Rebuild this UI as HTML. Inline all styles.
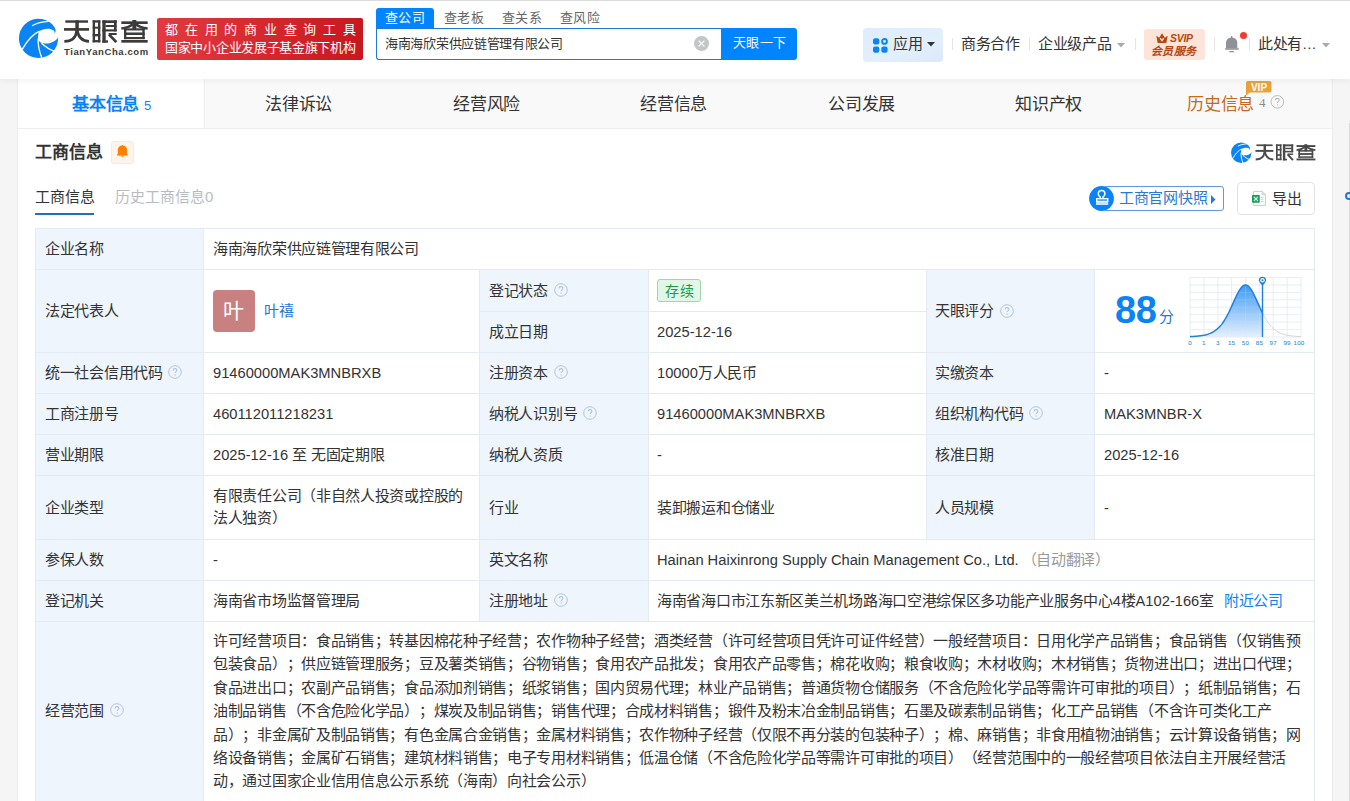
<!DOCTYPE html>
<html lang="zh-CN"><head><meta charset="utf-8">
<style>
*{box-sizing:border-box;margin:0;padding:0}
html,body{width:1350px;height:801px;overflow:hidden}
body{background:#f5f5f5;font-family:"Liberation Sans",sans-serif;color:#333;position:relative;text-spacing-trim:space-all}
.abs{position:absolute}
.hdr{position:absolute;left:0;top:0;width:1350px;height:79px;background:#fff;border-top:1px solid #dcdcdc;box-shadow:0 2px 6px rgba(0,0,0,.05);z-index:2}
.nowrap{white-space:nowrap}
.t{font-size:14.7px;line-height:22px}
</style></head><body>
<div class="hdr">
<svg class="abs" style="left:15px;top:13px" width="48" height="48" viewBox="0 0 800 800"><circle cx="392" cy="405" r="327" fill="#0a84f5"/>
    <path d="M400 290 C470 240 590 225 650 280 C665 300 665 320 655 338 C690 300 685 235 630 180 L780 110 L780 365 L722 382 C680 465 560 510 445 485 C400 465 385 430 385 400 C385 350 390 310 400 290Z" fill="#fff"/>
    <path d="M285 195 Q400 130 560 122" stroke="#fff" stroke-width="22" fill="none"/>
    <path d="M120 590 C200 450 300 330 410 285" stroke="#fff" stroke-width="22" fill="none"/>
    <path d="M385 410 C380 530 410 640 450 740" stroke="#fff" stroke-width="22" fill="none"/>
    <path d="M440 485 C520 560 580 600 650 620" stroke="#fff" stroke-width="22" fill="none"/></svg>
<svg class="abs" style="left:62px;top:16px" width="90" height="30" viewBox="0 0 1350 450"><g fill="#3d3a3a" stroke="none">
<rect x="50" y="50" width="340" height="36"/><rect x="30" y="166" width="375" height="40"/><rect x="200" y="50" width="52" height="156"/>
<rect x="460" y="50" width="115" height="34"/><rect x="460" y="346" width="115" height="34"/><rect x="460" y="50" width="36" height="330"/><rect x="540" y="50" width="35" height="330"/><rect x="460" y="145" width="115" height="30"/><rect x="460" y="255" width="115" height="35"/>
<rect x="605" y="50" width="50" height="335"/><rect x="605" y="50" width="215" height="40"/><rect x="780" y="50" width="40" height="165"/><rect x="655" y="120" width="160" height="30"/><rect x="605" y="185" width="215" height="32"/><rect x="605" y="350" width="85" height="35"/><rect x="700" y="240" width="120" height="30"/>
<rect x="890" y="65" width="395" height="40"/><rect x="1055" y="45" width="60" height="150"/>
<rect x="930" y="170" width="35" height="162"/><rect x="1205" y="170" width="35" height="162"/><rect x="930" y="170" width="310" height="32"/><rect x="930" y="232" width="310" height="38"/><rect x="930" y="300" width="310" height="32"/>
<rect x="890" y="345" width="395" height="40"/>
</g><g fill="none" stroke="#3d3a3a" stroke-width="40">
<path d="M222 200 Q205 365 35 365"/><path d="M228 200 Q255 365 405 365"/>
<path d="M705 262 L815 378"/>
<path d="M1072 100 Q990 165 890 172" stroke-width="38"/><path d="M1098 100 Q1180 165 1285 172" stroke-width="38"/>
</g></svg>
<div class="abs nowrap" style="left:64px;top:44.5px;font-size:9.5px;font-weight:bold;color:#3d3a3a;letter-spacing:0.6px;line-height:11px">TianYanCha.com</div>
<div class="abs" style="left:157px;top:17px;width:206px;height:42px;border-radius:2px;background:linear-gradient(90deg,#e23a40,#c9171e)"></div>
<div class="abs nowrap" style="left:165px;top:21px;font-size:13px;color:#fff;line-height:16px;letter-spacing:6.75px">都在用的商业查询工具</div>
<div class="abs nowrap" style="left:165px;top:38px;font-size:13px;color:#fff;line-height:17px;letter-spacing:-0.3px">国家中小企业发展子基金旗下机构</div>
<div class="abs" style="left:376px;top:7px;width:58px;height:20px;background:#0084ff;border-radius:3px 3px 0 0"></div>
<div class="abs nowrap" style="left:385px;top:8px;font-size:13.3px;color:#fff;line-height:17px"><span style="font-size:13px;letter-spacing:0.30px">查公司</span></div>
<div class="abs nowrap" style="left:444px;top:8px;font-size:13.3px;color:#666;line-height:17px"><span style="font-size:13px;letter-spacing:0.30px">查老板</span></div>
<div class="abs nowrap" style="left:502px;top:8px;font-size:13.3px;color:#666;line-height:17px"><span style="font-size:13px;letter-spacing:0.30px">查关系</span></div>
<div class="abs nowrap" style="left:560px;top:8px;font-size:13.3px;color:#666;line-height:17px"><span style="font-size:13px;letter-spacing:0.30px">查风险</span></div>
<div class="abs" style="left:376px;top:27px;width:350px;height:32px;border:1px solid #1f7ad6;border-right:none;border-radius:0 0 0 3px;background:#fff"></div>
<div class="abs nowrap" style="left:385px;top:34px;font-size:12.7px;color:#333;line-height:18px"><span style="font-size:13px;letter-spacing:-0.30px">海南海欣荣供应链管理有限公司</span></div>
<svg class="abs" style="left:694px;top:35px" width="15" height="15" viewBox="0 0 15 15"><circle cx="7.5" cy="7.5" r="7.5" fill="#c4c5c9"/><path d="M4.6 4.6L10.4 10.4M10.4 4.6L4.6 10.4" stroke="#fff" stroke-width="1.3"/></svg>
<div class="abs" style="left:721px;top:27px;width:76px;height:32px;background:#0084ff;border-radius:0 3px 3px 0"></div>
<div class="abs nowrap" style="left:733px;top:33px;font-size:13.3px;color:#fff;line-height:18px"><span style="font-size:13px;letter-spacing:0.30px">天眼一下</span></div>
<div class="abs" style="left:863px;top:27px;width:80px;height:34px;background:linear-gradient(160deg,#deecfc 0%,#e2effd 60%,#dbe8fa 100%);border-radius:4px"></div>
<svg class="abs" style="left:873px;top:36.5px" width="15" height="15" viewBox="0 0 15 15"><rect x="0" y="0.3" width="6.3" height="6.3" rx="2" fill="#0a84f5"/><circle cx="11.5" cy="3.4" r="2.4" fill="none" stroke="#0a84f5" stroke-width="1.9"/><rect x="0" y="8.5" width="6.3" height="6.3" rx="2" fill="#0a84f5"/><rect x="8.3" y="8.5" width="6.3" height="6.3" rx="2" fill="#0a84f5"/></svg>
<div class="abs nowrap" style="left:893px;top:33px;font-size:14.7px;color:#333;line-height:20px"><span style="font-size:15px;letter-spacing:-0.30px">应用</span></div>
<svg class="abs" style="left:927px;top:40.5px" width="8" height="5" viewBox="0 0 8 5"><path d="M0 0H8L4 4.5Z" fill="#333"/></svg>
<div class="abs" style="left:952px;top:37px;width:1px;height:12px;background:#e5e5e5"></div>
<div class="abs nowrap" style="left:961px;top:33px;font-size:14.7px;color:#333;line-height:20px"><span style="font-size:15px;letter-spacing:-0.30px">商务合作</span></div>
<div class="abs" style="left:1029px;top:37px;width:1px;height:12px;background:#e5e5e5"></div>
<div class="abs nowrap" style="left:1038px;top:33px;font-size:14.7px;color:#333;line-height:20px"><span style="font-size:15px;letter-spacing:-0.30px">企业级产品</span></div>
<svg class="abs" style="left:1117px;top:42px" width="8" height="5" viewBox="0 0 8 5"><path d="M0 0H8L4 4.5Z" fill="#aaa"/></svg>
<div class="abs" style="left:1135px;top:37px;width:1px;height:12px;background:#e5e5e5"></div>
<div class="abs" style="left:1144px;top:28px;width:61px;height:31px;background:#fde4d8;border-radius:3px"></div>
<svg class="abs" style="left:1156px;top:32px" width="12" height="10" viewBox="0 0 12 10"><path d="M0.3 2.8L3.2 4.8L6 0.3L8.8 4.8L11.7 2.8L10.3 10H1.7Z" fill="#b8460f"/><path d="M4.2 5.2L6 7.6L7.8 5.2" fill="none" stroke="#fde5da" stroke-width="1.3"/></svg>
<div class="abs nowrap" style="left:1170px;top:29px;font-size:10.5px;font-weight:bold;font-style:italic;color:#b8460f;line-height:16px;letter-spacing:-0.3px">SVIP</div>
<div class="abs nowrap" style="left:1151px;top:43px;font-size:11px;font-weight:bold;font-style:italic;color:#b8460f;line-height:14px;letter-spacing:0.3px">会员服务</div>
<div class="abs" style="left:1214px;top:37px;width:1px;height:12px;background:#e5e5e5"></div>
<svg class="abs" style="left:1224px;top:34px" width="16" height="18" viewBox="0 0 16 18"><rect x="7" y="1" width="1.3" height="2.5" fill="#8f9398"/><path d="M2 13.4V8C2 4.7 4.5 2.6 7.65 2.6C10.8 2.6 13.3 4.7 13.3 8V13.4Z" fill="#8f9398"/><rect x="1" y="13.2" width="13.8" height="1.5" rx=".4" fill="#8f9398"/><rect x="5.4" y="16" width="4.5" height="1.3" fill="#8f9398"/></svg>
<div class="abs" style="left:1240px;top:30.5px;width:7px;height:7px;border-radius:50%;background:#f53a30"></div>
<div class="abs" style="left:1249px;top:37px;width:1px;height:12px;background:#e5e5e5"></div>
<div class="abs nowrap" style="left:1258px;top:33px;font-size:14.7px;color:#333;line-height:20px"><span style="font-size:15px;letter-spacing:-0.30px">此处有</span>…</div>
<svg class="abs" style="left:1322px;top:42px" width="8" height="5" viewBox="0 0 8 5"><path d="M0 0H8L4 4.5Z" fill="#aaa"/></svg>
</div>
<div class="abs" style="left:17px;top:79px;width:1px;height:722px;background:#ebebeb"></div>
<div class="abs" style="left:1332px;top:79px;width:1px;height:722px;background:#ebebeb"></div>
<div class="abs" style="left:1349px;top:123px;width:1px;height:678px;background:#dcdcdc"></div>
<div class="abs" style="left:18px;top:79px;width:1314px;height:50px;background:#f9f9f9;border-bottom:1px solid #efefef"></div>
<div class="abs" style="left:18px;top:79px;width:187px;height:49px;background:#fff;border-right:1px solid #eee"></div>
<div class="abs nowrap" style="left:72px;top:94px;font-size:16.8px;font-weight:bold;color:#0a84f5;line-height:22px"><span style="font-size:17px;letter-spacing:-0.20px">基本信息</span> <span style="font-size:13px;font-weight:normal">5</span></div>
<div class="abs nowrap" style="left:265px;top:94px;font-size:16.8px;color:#333;line-height:22px"><span style="font-size:17px;letter-spacing:-0.20px">法律诉讼</span></div>
<div class="abs nowrap" style="left:453px;top:94px;font-size:16.8px;color:#333;line-height:22px"><span style="font-size:17px;letter-spacing:-0.20px">经营风险</span></div>
<div class="abs nowrap" style="left:640px;top:94px;font-size:16.8px;color:#333;line-height:22px"><span style="font-size:17px;letter-spacing:-0.20px">经营信息</span></div>
<div class="abs nowrap" style="left:828px;top:94px;font-size:16.8px;color:#333;line-height:22px"><span style="font-size:17px;letter-spacing:-0.20px">公司发展</span></div>
<div class="abs nowrap" style="left:1015px;top:94px;font-size:16.8px;color:#333;line-height:22px"><span style="font-size:17px;letter-spacing:-0.20px">知识产权</span></div>
<div class="abs nowrap" style="left:1187px;top:94px;font-size:16.8px;color:#c6691a;line-height:22px"><span style="font-size:17px;letter-spacing:-0.20px">历史信息</span></div>
<div class="abs nowrap" style="left:1259px;top:93px;font-size:13px;color:#8a8a8a;line-height:20px;font-family:'Liberation Serif',serif">4</div>
<div class="abs" style="left:18px;top:129px;width:1314px;height:672px;background:#fff"></div>
<div class="abs nowrap" style="left:35px;top:142px;font-size:17px;font-weight:bold;color:#333;line-height:22px">工商信息</div>
<div class="abs" style="left:111px;top:141px;width:23px;height:23px;background:#fff4ea;border:1px solid #fce8d8;border-radius:3px"></div>
<svg class="abs" style="left:116px;top:145px" width="13" height="13" viewBox="0 0 13 13"><rect x="6" y="0" width="0.9" height="1.2" fill="#ff8000"/><path d="M1.8 9.4V5C1.8 2.4 3.8 0.6 6.4 0.6C9 0.6 11 2.4 11 5V9.4Z" fill="#ff8000"/><rect x="1" y="9.1" width="10.8" height="1.5" rx=".6" fill="#ff8000"/><path d="M5 10.5A1.4 1.4 0 0 0 7.8 10.5Z" fill="#ff8000"/></svg>
<svg class="abs" style="left:1229px;top:139.5px" width="25" height="25" viewBox="0 0 800 800"><circle cx="392" cy="405" r="327" fill="#0a84f5"/>
    <path d="M400 290 C470 240 590 225 650 280 C665 300 665 320 655 338 C690 300 685 235 630 180 L780 110 L780 365 L722 382 C680 465 560 510 445 485 C400 465 385 430 385 400 C385 350 390 310 400 290Z" fill="#fff"/>
    <path d="M285 195 Q400 130 560 122" stroke="#fff" stroke-width="30" fill="none"/>
    <path d="M120 590 C200 450 300 330 410 285" stroke="#fff" stroke-width="30" fill="none"/>
    <path d="M385 410 C380 530 410 640 450 740" stroke="#fff" stroke-width="30" fill="none"/>
    <path d="M440 485 C520 560 580 600 650 620" stroke="#fff" stroke-width="30" fill="none"/></svg>
<svg class="abs" style="left:1253.6px;top:141.8px" width="64.5" height="21.5" viewBox="0 0 1350 450"><g fill="#4a4a4a" stroke="none">
<rect x="50" y="50" width="340" height="36"/><rect x="30" y="166" width="375" height="40"/><rect x="200" y="50" width="52" height="156"/>
<rect x="460" y="50" width="115" height="34"/><rect x="460" y="346" width="115" height="34"/><rect x="460" y="50" width="36" height="330"/><rect x="540" y="50" width="35" height="330"/><rect x="460" y="145" width="115" height="30"/><rect x="460" y="255" width="115" height="35"/>
<rect x="605" y="50" width="50" height="335"/><rect x="605" y="50" width="215" height="40"/><rect x="780" y="50" width="40" height="165"/><rect x="655" y="120" width="160" height="30"/><rect x="605" y="185" width="215" height="32"/><rect x="605" y="350" width="85" height="35"/><rect x="700" y="240" width="120" height="30"/>
<rect x="890" y="65" width="395" height="40"/><rect x="1055" y="45" width="60" height="150"/>
<rect x="930" y="170" width="35" height="162"/><rect x="1205" y="170" width="35" height="162"/><rect x="930" y="170" width="310" height="32"/><rect x="930" y="232" width="310" height="38"/><rect x="930" y="300" width="310" height="32"/>
<rect x="890" y="345" width="395" height="40"/>
</g><g fill="none" stroke="#4a4a4a" stroke-width="40">
<path d="M222 200 Q205 365 35 365"/><path d="M228 200 Q255 365 405 365"/>
<path d="M705 262 L815 378"/>
<path d="M1072 100 Q990 165 890 172" stroke-width="38"/><path d="M1098 100 Q1180 165 1285 172" stroke-width="38"/>
</g></svg>
<div class="abs nowrap" style="left:35px;top:187px;font-size:15px;color:#333;line-height:20px">工商信息</div>
<div class="abs" style="left:35px;top:213px;width:59px;height:2px;background:#1f6fc6"></div>
<div class="abs nowrap" style="left:115px;top:187px;font-size:15px;color:#b8bcc2;line-height:20px">历史工商信息0</div>
<div class="abs" style="left:1103px;top:186px;width:121px;height:25px;border:1px solid #5d9be0;border-radius:3px"></div>
<svg class="abs" style="left:1089px;top:186px" width="25" height="25" viewBox="0 0 25 25"><circle cx="12.5" cy="12.5" r="12.4" fill="#0a84f5"/><path d="M11.2 12.6V10.9C9.9 10.3 9.3 9.1 9.3 7.8C9.3 6 10.8 4.6 12.6 4.6C14.4 4.6 15.9 6 15.9 7.8C15.9 9.1 15.2 10.3 14 10.9V12.6" fill="none" stroke="#fff" stroke-width="1.5"/><rect x="7.7" y="12.7" width="11" height="2.7" fill="none" stroke="#fff" stroke-width="1.4"/><rect x="7" y="16" width="12.2" height="3" fill="#c5e6fc"/></svg>
<div class="abs nowrap" style="left:1119px;top:188px;font-size:14.7px;color:#2a7ad3;line-height:20px"><span style="font-size:15px;letter-spacing:-0.30px">工商官网快照</span></div>
<svg class="abs" style="left:1211px;top:195px" width="5" height="9" viewBox="0 0 5 9"><path d="M0 0L4.5 4.5L0 9Z" fill="#2a7ad3"/></svg>
<div class="abs" style="left:1237px;top:182px;width:78px;height:33px;border:1px solid #e3e3e3;border-radius:4px"></div>
<svg class="abs" style="left:1251px;top:190px" width="16" height="17" viewBox="0 0 16 17"><path d="M2.6 1.4H11.2L14.4 4.6V15.4H2.6Z" fill="#fff" stroke="#c9cacd" stroke-width="1"/><path d="M11.2 1.4V4.6H14.4" fill="#e6e6e8" stroke="#c9cacd" stroke-width="1"/><path d="M10 7.4H12.4M10 9.3H12.4M10 11.4H12.4" stroke="#c3c3c6" stroke-width="0.9"/><rect x="1" y="5" width="7.8" height="7.8" rx="0.8" fill="#1f9d5c"/><path d="M2.9 6.9L6.9 10.9M6.9 6.9L2.9 10.9" stroke="#c8f7dc" stroke-width="1.3"/></svg>
<div class="abs nowrap" style="left:1272px;top:189px;font-size:14.7px;color:#333;line-height:20px"><span style="font-size:15px;letter-spacing:-0.30px">导出</span></div>
<div class="abs" style="left:35px;top:228px;width:168px;height:573px;background:#eef5fd"></div>
<div class="abs" style="left:479px;top:269px;width:169px;height:352px;background:#eef5fd"></div>
<div class="abs" style="left:926px;top:269px;width:168px;height:270px;background:#eef5fd"></div>
<div class="abs" style="left:35px;top:228px;width:1280px;height:1px;background:#e3eaf1"></div>
<div class="abs" style="left:35px;top:269px;width:1280px;height:1px;background:#e3eaf1"></div>
<div class="abs" style="left:35px;top:352px;width:1280px;height:1px;background:#e3eaf1"></div>
<div class="abs" style="left:35px;top:393px;width:1280px;height:1px;background:#e3eaf1"></div>
<div class="abs" style="left:35px;top:434px;width:1280px;height:1px;background:#e3eaf1"></div>
<div class="abs" style="left:35px;top:475px;width:1280px;height:1px;background:#e3eaf1"></div>
<div class="abs" style="left:35px;top:539px;width:1280px;height:1px;background:#e3eaf1"></div>
<div class="abs" style="left:35px;top:580px;width:1280px;height:1px;background:#e3eaf1"></div>
<div class="abs" style="left:35px;top:621px;width:1280px;height:1px;background:#e3eaf1"></div>
<div class="abs" style="left:479px;top:311px;width:448px;height:1px;background:#e3eaf1"></div>
<div class="abs" style="left:35px;top:228px;width:1px;height:574px;background:#e3eaf1"></div>
<div class="abs" style="left:203px;top:228px;width:1px;height:574px;background:#e3eaf1"></div>
<div class="abs" style="left:1314px;top:228px;width:1px;height:574px;background:#e3eaf1"></div>
<div class="abs" style="left:479px;top:269px;width:1px;height:353px;background:#e3eaf1"></div>
<div class="abs" style="left:648px;top:269px;width:1px;height:353px;background:#e3eaf1"></div>
<div class="abs" style="left:926px;top:269px;width:1px;height:271px;background:#e3eaf1"></div>
<div class="abs" style="left:1094px;top:269px;width:1px;height:271px;background:#e3eaf1"></div>
<div class="abs nowrap t" style="left:45px;top:238.0px;color:#333"><span style="font-size:15px;letter-spacing:-0.30px">企业名称</span></div>
<div class="abs nowrap t" style="left:213px;top:238.0px;color:#333"><span style="font-size:15px;letter-spacing:-0.30px">海南海欣荣供应链管理有限公司</span></div>
<div class="abs nowrap t" style="left:45px;top:300.0px;color:#333"><span style="font-size:15px;letter-spacing:-0.30px">法定代表人</span></div>
<div class="abs nowrap t" style="left:489px;top:279.5px;color:#333"><span style="font-size:15px;letter-spacing:-0.30px">登记状态</span></div>
<div class="abs nowrap t" style="left:489px;top:321.0px;color:#333"><span style="font-size:15px;letter-spacing:-0.30px">成立日期</span></div>
<div class="abs nowrap t" style="left:657px;top:321.0px;color:#333">2025-12-16</div>
<div class="abs nowrap t" style="left:935px;top:300.0px;color:#333"><span style="font-size:15px;letter-spacing:-0.30px">天眼评分</span></div>
<div class="abs nowrap t" style="left:45px;top:362.0px;color:#333"><span style="font-size:15px;letter-spacing:-0.30px">统一社会信用代码</span></div>
<div class="abs nowrap t" style="left:213px;top:362.0px;color:#333">91460000MAK3MNBRXB</div>
<div class="abs nowrap t" style="left:489px;top:362.0px;color:#333"><span style="font-size:15px;letter-spacing:-0.30px">注册资本</span></div>
<div class="abs nowrap t" style="left:657px;top:362.0px;color:#333">10000<span style="font-size:15px;letter-spacing:-0.30px">万人民币</span></div>
<div class="abs nowrap t" style="left:935px;top:362.0px;color:#333"><span style="font-size:15px;letter-spacing:-0.30px">实缴资本</span></div>
<div class="abs nowrap t" style="left:1104px;top:362.0px;color:#333">-</div>
<div class="abs nowrap t" style="left:45px;top:403.0px;color:#333"><span style="font-size:15px;letter-spacing:-0.30px">工商注册号</span></div>
<div class="abs nowrap t" style="left:213px;top:403.0px;color:#333">460112011218231</div>
<div class="abs nowrap t" style="left:489px;top:403.0px;color:#333"><span style="font-size:15px;letter-spacing:-0.30px">纳税人识别号</span></div>
<div class="abs nowrap t" style="left:657px;top:403.0px;color:#333">91460000MAK3MNBRXB</div>
<div class="abs nowrap t" style="left:935px;top:403.0px;color:#333"><span style="font-size:15px;letter-spacing:-0.30px">组织机构代码</span></div>
<div class="abs nowrap t" style="left:1104px;top:403.0px;color:#333">MAK3MNBR-X</div>
<div class="abs nowrap t" style="left:45px;top:444.0px;color:#333"><span style="font-size:15px;letter-spacing:-0.30px">营业期限</span></div>
<div class="abs nowrap t" style="left:213px;top:444.0px;color:#333">2025-12-16 <span style="font-size:15px;letter-spacing:-0.30px">至</span> <span style="font-size:15px;letter-spacing:-0.30px">无固定期限</span></div>
<div class="abs nowrap t" style="left:489px;top:444.0px;color:#333"><span style="font-size:15px;letter-spacing:-0.30px">纳税人资质</span></div>
<div class="abs nowrap t" style="left:657px;top:444.0px;color:#333">-</div>
<div class="abs nowrap t" style="left:935px;top:444.0px;color:#333"><span style="font-size:15px;letter-spacing:-0.30px">核准日期</span></div>
<div class="abs nowrap t" style="left:1104px;top:444.0px;color:#333">2025-12-16</div>
<div class="abs nowrap t" style="left:45px;top:496.5px;color:#333"><span style="font-size:15px;letter-spacing:-0.30px">企业类型</span></div>
<div class="abs nowrap t" style="left:489px;top:496.5px;color:#333"><span style="font-size:15px;letter-spacing:-0.30px">行业</span></div>
<div class="abs nowrap t" style="left:657px;top:496.5px;color:#333"><span style="font-size:15px;letter-spacing:-0.30px">装卸搬运和仓储业</span></div>
<div class="abs nowrap t" style="left:935px;top:496.5px;color:#333"><span style="font-size:15px;letter-spacing:-0.30px">人员规模</span></div>
<div class="abs nowrap t" style="left:1104px;top:496.5px;color:#333">-</div>
<div class="abs nowrap t" style="left:45px;top:549.0px;color:#333"><span style="font-size:15px;letter-spacing:-0.30px">参保人数</span></div>
<div class="abs nowrap t" style="left:213px;top:549.0px;color:#333">-</div>
<div class="abs nowrap t" style="left:489px;top:549.0px;color:#333"><span style="font-size:15px;letter-spacing:-0.30px">英文名称</span></div>
<div class="abs nowrap t" style="left:657px;top:549.0px;color:#333">Hainan Haixinrong Supply Chain Management Co., Ltd.<span style="color:#999;margin-left:3px"><span style="font-size:15px;letter-spacing:-0.30px">（自动翻译）</span></span></div>
<div class="abs nowrap t" style="left:45px;top:590.0px;color:#333"><span style="font-size:15px;letter-spacing:-0.30px">登记机关</span></div>
<div class="abs nowrap t" style="left:213px;top:590.0px;color:#333"><span style="font-size:15px;letter-spacing:-0.30px">海南省市场监督管理局</span></div>
<div class="abs nowrap t" style="left:489px;top:590.0px;color:#333"><span style="font-size:15px;letter-spacing:-0.30px">注册地址</span></div>
<div class="abs nowrap t" style="left:657px;top:590.0px;color:#333"><span style="font-size:15px;letter-spacing:-0.30px">海南省海口市江东新区美兰机场路海口空港综保区多功能产业服务中心</span>4<span style="font-size:15px;letter-spacing:-0.30px">楼</span>A102-166<span style="font-size:15px;letter-spacing:-0.30px">室</span> <span style="color:#0a84f5;margin-left:6px"><span style="font-size:15px;letter-spacing:-0.30px">附近公司</span></span></div>
<div class="abs nowrap t" style="left:213px;top:485px;color:#333"><span style="font-size:15px;letter-spacing:-0.30px">有限责任公司（非自然人投资或控股的</span></div>
<div class="abs nowrap t" style="left:213px;top:507px;color:#333"><span style="font-size:15px;letter-spacing:-0.30px">法人独资）</span></div>
<div class="abs nowrap t" style="left:45px;top:700px;color:#333"><span style="font-size:15px;letter-spacing:-0.30px">经营范围</span></div>
<div class="abs nowrap t" style="left:213px;top:630.0px;color:#333"><span style="font-size:15px;letter-spacing:-0.30px">许可经营项目：食品销售；转基因棉花种子经营；农作物种子经营；酒类经营（许可经营项目凭许可证件经营）一般经营项目：日用化学产品销售；食品销售（仅销售预</span></div>
<div class="abs nowrap t" style="left:213px;top:653.4px;color:#333"><span style="font-size:15px;letter-spacing:-0.30px">包装食品）；供应链管理服务；豆及薯类销售；谷物销售；食用农产品批发；食用农产品零售；棉花收购；粮食收购；木材收购；木材销售；货物进出口；进出口代理；</span></div>
<div class="abs nowrap t" style="left:213px;top:676.8px;color:#333"><span style="font-size:15px;letter-spacing:-0.30px">食品进出口；农副产品销售；食品添加剂销售；纸浆销售；国内贸易代理；林业产品销售；普通货物仓储服务（不含危险化学品等需许可审批的项目）；纸制品销售；石</span></div>
<div class="abs nowrap t" style="left:213px;top:700.2px;color:#333"><span style="font-size:15px;letter-spacing:-0.30px">油制品销售（不含危险化学品）；煤炭及制品销售；销售代理；合成材料销售；锻件及粉末冶金制品销售；石墨及碳素制品销售；化工产品销售（不含许可类化工产</span></div>
<div class="abs nowrap t" style="left:213px;top:723.6px;color:#333"><span style="font-size:15px;letter-spacing:-0.30px">品）；非金属矿及制品销售；有色金属合金销售；金属材料销售；农作物种子经营（仅限不再分装的包装种子）；棉、麻销售；非食用植物油销售；云计算设备销售；网</span></div>
<div class="abs nowrap t" style="left:213px;top:747.0px;color:#333"><span style="font-size:15px;letter-spacing:-0.30px">络设备销售；金属矿石销售；建筑材料销售；电子专用材料销售；低温仓储（不含危险化学品等需许可审批的项目）（经营范围中的一般经营项目依法自主开展经营活</span></div>
<div class="abs nowrap t" style="left:213px;top:770.4px;color:#333"><span style="font-size:15px;letter-spacing:-0.30px">动，通过国家企业信用信息公示系统（海南）向社会公示）</span></div>
<div class="abs" style="left:213px;top:290px;width:42px;height:42px;border-radius:4px;background:#c98080"></div>
<div class="abs nowrap" style="left:223px;top:300px;font-size:21px;color:#fff;line-height:22px">叶</div>
<div class="abs nowrap" style="left:264px;top:300px;font-size:14.7px;color:#1f78d1;line-height:22px"><span style="font-size:15px;letter-spacing:-0.30px">叶禧</span></div>
<div class="abs" style="left:657px;top:279px;width:44px;height:23px;border-radius:3px;background:#e0f7e7;border:1px solid #a3d3b0"></div>
<div class="abs nowrap" style="left:665px;top:279.5px;font-size:14px;letter-spacing:1px;color:#1a9a46;line-height:22px">存续</div>
<svg class="abs" style="left:554px;top:282.5px" width="14" height="14" viewBox="0 0 14 14"><circle cx="7" cy="7" r="6.3" fill="none" stroke="#b0c5da" stroke-width="1"/><path d="M5.1 5.4C5.1 4.3 5.9 3.6 7 3.6S8.9 4.3 8.9 5.3C8.9 6.5 7.2 6.7 7.2 8.1" fill="none" stroke="#b0c5da" stroke-width="1.1"/><circle cx="7.2" cy="10" r=".65" fill="#b0c5da"/></svg>
<svg class="abs" style="left:1000px;top:303.5px" width="14" height="14" viewBox="0 0 14 14"><circle cx="7" cy="7" r="6.3" fill="none" stroke="#b0c5da" stroke-width="1"/><path d="M5.1 5.4C5.1 4.3 5.9 3.6 7 3.6S8.9 4.3 8.9 5.3C8.9 6.5 7.2 6.7 7.2 8.1" fill="none" stroke="#b0c5da" stroke-width="1.1"/><circle cx="7.2" cy="10" r=".65" fill="#b0c5da"/></svg>
<svg class="abs" style="left:168px;top:365.3px" width="14" height="14" viewBox="0 0 14 14"><circle cx="7" cy="7" r="6.3" fill="none" stroke="#b0c5da" stroke-width="1"/><path d="M5.1 5.4C5.1 4.3 5.9 3.6 7 3.6S8.9 4.3 8.9 5.3C8.9 6.5 7.2 6.7 7.2 8.1" fill="none" stroke="#b0c5da" stroke-width="1.1"/><circle cx="7.2" cy="10" r=".65" fill="#b0c5da"/></svg>
<svg class="abs" style="left:554px;top:365.3px" width="14" height="14" viewBox="0 0 14 14"><circle cx="7" cy="7" r="6.3" fill="none" stroke="#b0c5da" stroke-width="1"/><path d="M5.1 5.4C5.1 4.3 5.9 3.6 7 3.6S8.9 4.3 8.9 5.3C8.9 6.5 7.2 6.7 7.2 8.1" fill="none" stroke="#b0c5da" stroke-width="1.1"/><circle cx="7.2" cy="10" r=".65" fill="#b0c5da"/></svg>
<svg class="abs" style="left:583px;top:406.3px" width="14" height="14" viewBox="0 0 14 14"><circle cx="7" cy="7" r="6.3" fill="none" stroke="#b0c5da" stroke-width="1"/><path d="M5.1 5.4C5.1 4.3 5.9 3.6 7 3.6S8.9 4.3 8.9 5.3C8.9 6.5 7.2 6.7 7.2 8.1" fill="none" stroke="#b0c5da" stroke-width="1.1"/><circle cx="7.2" cy="10" r=".65" fill="#b0c5da"/></svg>
<svg class="abs" style="left:1029.3px;top:406.3px" width="14" height="14" viewBox="0 0 14 14"><circle cx="7" cy="7" r="6.3" fill="none" stroke="#b0c5da" stroke-width="1"/><path d="M5.1 5.4C5.1 4.3 5.9 3.6 7 3.6S8.9 4.3 8.9 5.3C8.9 6.5 7.2 6.7 7.2 8.1" fill="none" stroke="#b0c5da" stroke-width="1.1"/><circle cx="7.2" cy="10" r=".65" fill="#b0c5da"/></svg>
<svg class="abs" style="left:554px;top:593.3px" width="14" height="14" viewBox="0 0 14 14"><circle cx="7" cy="7" r="6.3" fill="none" stroke="#b0c5da" stroke-width="1"/><path d="M5.1 5.4C5.1 4.3 5.9 3.6 7 3.6S8.9 4.3 8.9 5.3C8.9 6.5 7.2 6.7 7.2 8.1" fill="none" stroke="#b0c5da" stroke-width="1.1"/><circle cx="7.2" cy="10" r=".65" fill="#b0c5da"/></svg>
<svg class="abs" style="left:110px;top:702.8px" width="14" height="14" viewBox="0 0 14 14"><circle cx="7" cy="7" r="6.3" fill="none" stroke="#b0c5da" stroke-width="1"/><path d="M5.1 5.4C5.1 4.3 5.9 3.6 7 3.6S8.9 4.3 8.9 5.3C8.9 6.5 7.2 6.7 7.2 8.1" fill="none" stroke="#b0c5da" stroke-width="1.1"/><circle cx="7.2" cy="10" r=".65" fill="#b0c5da"/></svg>
<svg class="abs" style="left:1245px;top:81px" width="27" height="15" viewBox="0 0 27 15"><path d="M2.5 0H24.5A2 2 0 0 1 26.5 2V9.5A2 2 0 0 1 24.5 11.5H5L1 14.5V2A2 2 0 0 1 2.5 0Z" fill="#e9a23b"/><text x="14" y="9.6" font-family="Liberation Sans" font-size="10" font-weight="bold" fill="#fff" text-anchor="middle">VIP</text></svg>
<svg class="abs" style="left:1270px;top:95px" width="15" height="15" viewBox="0 0 15 15"><circle cx="7.3" cy="6.8" r="6.3" fill="none" stroke="#bbb" stroke-width="1"/><path d="M5.4 5.2C5.4 4.1 6.2 3.4 7.3 3.4S9.2 4.1 9.2 5.1C9.2 6.3 7.5 6.5 7.5 7.9" fill="none" stroke="#bbb" stroke-width="1.1"/><circle cx="7.5" cy="9.8" r=".65" fill="#bbb"/></svg>
<div class="abs" style="left:1345px;top:192px;width:8px;height:8px;border-radius:50%;border:2px solid #1f78d1"></div>
<div class="abs nowrap" style="left:1115px;top:288px;font-size:38px;font-weight:bold;color:#0a84f5;line-height:44px;letter-spacing:-0.5px">88</div>
<div class="abs nowrap" style="left:1159px;top:306.5px;font-size:15px;color:#1f78d1;line-height:20px">分</div>
<svg class="abs" style="left:1185px;top:272px" width="125" height="78" viewBox="1185 272 125 78"><line x1="1190.0" y1="277.5" x2="1190.0" y2="337" stroke="#eef2f8" stroke-width="1"/><line x1="1203.9" y1="277.5" x2="1203.9" y2="337" stroke="#eef2f8" stroke-width="1"/><line x1="1217.8" y1="277.5" x2="1217.8" y2="337" stroke="#eef2f8" stroke-width="1"/><line x1="1231.6" y1="277.5" x2="1231.6" y2="337" stroke="#eef2f8" stroke-width="1"/><line x1="1245.5" y1="277.5" x2="1245.5" y2="337" stroke="#eef2f8" stroke-width="1"/><line x1="1259.4" y1="277.5" x2="1259.4" y2="337" stroke="#eef2f8" stroke-width="1"/><line x1="1273.2" y1="277.5" x2="1273.2" y2="337" stroke="#eef2f8" stroke-width="1"/><line x1="1287.1" y1="277.5" x2="1287.1" y2="337" stroke="#eef2f8" stroke-width="1"/><line x1="1301.0" y1="277.5" x2="1301.0" y2="337" stroke="#eef2f8" stroke-width="1"/><line x1="1190" y1="277.5" x2="1301" y2="277.5" stroke="#eef2f8" stroke-width="1"/><line x1="1190" y1="284.9" x2="1301" y2="284.9" stroke="#eef2f8" stroke-width="1"/><line x1="1190" y1="292.4" x2="1301" y2="292.4" stroke="#eef2f8" stroke-width="1"/><line x1="1190" y1="299.8" x2="1301" y2="299.8" stroke="#eef2f8" stroke-width="1"/><line x1="1190" y1="307.2" x2="1301" y2="307.2" stroke="#eef2f8" stroke-width="1"/><line x1="1190" y1="314.7" x2="1301" y2="314.7" stroke="#eef2f8" stroke-width="1"/><line x1="1190" y1="322.1" x2="1301" y2="322.1" stroke="#eef2f8" stroke-width="1"/><line x1="1190" y1="329.6" x2="1301" y2="329.6" stroke="#eef2f8" stroke-width="1"/><line x1="1190" y1="337.0" x2="1301" y2="337.0" stroke="#eef2f8" stroke-width="1"/><defs><linearGradient id="g1" x1="0" y1="0" x2="0" y2="1"><stop offset="0" stop-color="#3d9bf5"/><stop offset="1" stop-color="#e6f1fd"/></linearGradient></defs><path d="M1190.0 336.64 L1191.0 336.60 L1192.0 336.55 L1193.0 336.49 L1194.0 336.43 L1195.0 336.36 L1196.0 336.28 L1197.0 336.19 L1198.0 336.09 L1199.0 335.98 L1200.0 335.86 L1201.0 335.72 L1202.0 335.56 L1203.0 335.38 L1204.0 335.18 L1205.0 334.96 L1206.0 334.71 L1207.0 334.44 L1208.0 334.13 L1209.0 333.78 L1210.0 333.39 L1211.0 332.96 L1212.0 332.49 L1213.0 331.95 L1214.0 331.36 L1215.0 330.71 L1216.0 329.98 L1217.0 329.18 L1218.0 328.30 L1219.0 327.34 L1220.0 326.27 L1221.0 325.12 L1222.0 323.86 L1223.0 322.49 L1224.0 321.01 L1225.0 319.42 L1226.0 317.73 L1227.0 315.92 L1228.0 314.01 L1229.0 312.01 L1230.0 309.93 L1231.0 307.77 L1232.0 305.57 L1233.0 303.34 L1234.0 301.11 L1235.0 298.90 L1236.0 296.74 L1237.0 294.68 L1238.0 292.74 L1239.0 290.95 L1240.0 289.34 L1241.0 287.96 L1242.0 286.81 L1243.0 285.93 L1244.0 285.34 L1245.0 285.04 L1246.0 285.04 L1247.0 285.34 L1248.0 285.93 L1249.0 286.81 L1250.0 287.96 L1251.0 289.34 L1252.0 290.95 L1253.0 292.74 L1254.0 294.68 L1255.0 296.74 L1256.0 298.90 L1257.0 301.11 L1258.0 303.34 L1259.0 305.57 L1260.0 307.77 L1261.0 309.93 L1262.0 312.01 L1262.5 313.02 L1262.5 337 L1190 337 Z" fill="url(#g1)"/><line x1="1190.0" y1="277.5" x2="1190.0" y2="337" stroke="#d8e3f0" stroke-opacity="0.2" stroke-width="1"/><line x1="1203.9" y1="277.5" x2="1203.9" y2="337" stroke="#d8e3f0" stroke-opacity="0.2" stroke-width="1"/><line x1="1217.8" y1="277.5" x2="1217.8" y2="337" stroke="#d8e3f0" stroke-opacity="0.2" stroke-width="1"/><line x1="1231.6" y1="277.5" x2="1231.6" y2="337" stroke="#d8e3f0" stroke-opacity="0.2" stroke-width="1"/><line x1="1245.5" y1="277.5" x2="1245.5" y2="337" stroke="#d8e3f0" stroke-opacity="0.2" stroke-width="1"/><line x1="1259.4" y1="277.5" x2="1259.4" y2="337" stroke="#d8e3f0" stroke-opacity="0.2" stroke-width="1"/><line x1="1273.2" y1="277.5" x2="1273.2" y2="337" stroke="#d8e3f0" stroke-opacity="0.2" stroke-width="1"/><line x1="1287.1" y1="277.5" x2="1287.1" y2="337" stroke="#d8e3f0" stroke-opacity="0.2" stroke-width="1"/><line x1="1301.0" y1="277.5" x2="1301.0" y2="337" stroke="#d8e3f0" stroke-opacity="0.2" stroke-width="1"/><line x1="1190" y1="277.5" x2="1301" y2="277.5" stroke="#d8e3f0" stroke-opacity="0.2" stroke-width="1"/><line x1="1190" y1="284.9" x2="1301" y2="284.9" stroke="#d8e3f0" stroke-opacity="0.2" stroke-width="1"/><line x1="1190" y1="292.4" x2="1301" y2="292.4" stroke="#d8e3f0" stroke-opacity="0.2" stroke-width="1"/><line x1="1190" y1="299.8" x2="1301" y2="299.8" stroke="#d8e3f0" stroke-opacity="0.2" stroke-width="1"/><line x1="1190" y1="307.2" x2="1301" y2="307.2" stroke="#d8e3f0" stroke-opacity="0.2" stroke-width="1"/><line x1="1190" y1="314.7" x2="1301" y2="314.7" stroke="#d8e3f0" stroke-opacity="0.2" stroke-width="1"/><line x1="1190" y1="322.1" x2="1301" y2="322.1" stroke="#d8e3f0" stroke-opacity="0.2" stroke-width="1"/><line x1="1190" y1="329.6" x2="1301" y2="329.6" stroke="#d8e3f0" stroke-opacity="0.2" stroke-width="1"/><line x1="1190" y1="337.0" x2="1301" y2="337.0" stroke="#d8e3f0" stroke-opacity="0.2" stroke-width="1"/><path d="M1190.0 336.64 L1191.0 336.60 L1192.0 336.55 L1193.0 336.49 L1194.0 336.43 L1195.0 336.36 L1196.0 336.28 L1197.0 336.19 L1198.0 336.09 L1199.0 335.98 L1200.0 335.86 L1201.0 335.72 L1202.0 335.56 L1203.0 335.38 L1204.0 335.18 L1205.0 334.96 L1206.0 334.71 L1207.0 334.44 L1208.0 334.13 L1209.0 333.78 L1210.0 333.39 L1211.0 332.96 L1212.0 332.49 L1213.0 331.95 L1214.0 331.36 L1215.0 330.71 L1216.0 329.98 L1217.0 329.18 L1218.0 328.30 L1219.0 327.34 L1220.0 326.27 L1221.0 325.12 L1222.0 323.86 L1223.0 322.49 L1224.0 321.01 L1225.0 319.42 L1226.0 317.73 L1227.0 315.92 L1228.0 314.01 L1229.0 312.01 L1230.0 309.93 L1231.0 307.77 L1232.0 305.57 L1233.0 303.34 L1234.0 301.11 L1235.0 298.90 L1236.0 296.74 L1237.0 294.68 L1238.0 292.74 L1239.0 290.95 L1240.0 289.34 L1241.0 287.96 L1242.0 286.81 L1243.0 285.93 L1244.0 285.34 L1245.0 285.04 L1246.0 285.04 L1247.0 285.34 L1248.0 285.93 L1249.0 286.81 L1250.0 287.96 L1251.0 289.34 L1252.0 290.95 L1253.0 292.74 L1254.0 294.68 L1255.0 296.74 L1256.0 298.90 L1257.0 301.11 L1258.0 303.34 L1259.0 305.57 L1260.0 307.77 L1261.0 309.93 L1262.0 312.01 L1262.5 313.02" fill="none" stroke="#1f7ee0" stroke-width="1.5"/><path d="M1262.5 313.02 L1263.0 314.01 L1264.0 315.92 L1265.0 317.73 L1266.0 319.42 L1267.0 321.01 L1268.0 322.49 L1269.0 323.86 L1270.0 325.12 L1271.0 326.27 L1272.0 327.34 L1273.0 328.30 L1274.0 329.18 L1275.0 329.98 L1276.0 330.71 L1277.0 331.36 L1278.0 331.95 L1279.0 332.49 L1280.0 332.96 L1281.0 333.39 L1282.0 333.78 L1283.0 334.13 L1284.0 334.44 L1285.0 334.71 L1286.0 334.96 L1287.0 335.18 L1288.0 335.38 L1289.0 335.56 L1290.0 335.72 L1291.0 335.86 L1292.0 335.98 L1293.0 336.09 L1294.0 336.19 L1295.0 336.28 L1296.0 336.36 L1297.0 336.43 L1298.0 336.49 L1299.0 336.55 L1300.0 336.60 L1301.0 336.64" fill="none" stroke="#d3d7dc" stroke-width="1"/><line x1="1262.5" y1="281" x2="1262.5" y2="337" stroke="#1f7ee0" stroke-width="1.4"/><path d="M1258.9 280.3 A3.6 3.6 0 1 1 1266.1 280.3 Q1265.8 282.8 1262.5 285.5 Q1259.2 282.8 1258.9 280.3Z" fill="#1f7ee0"/><circle cx="1262.5" cy="280.2" r="2.2" fill="#fff"/><circle cx="1262.5" cy="280.2" r="1" fill="#1f7ee0"/><text x="1190.0" y="345" font-family="Liberation Sans" font-size="6.2" fill="#3a8ce0" stroke="#3a8ce0" stroke-width="0.08" letter-spacing="0.2" text-anchor="middle">0</text><text x="1203.9" y="345" font-family="Liberation Sans" font-size="6.2" fill="#3a8ce0" stroke="#3a8ce0" stroke-width="0.08" letter-spacing="0.2" text-anchor="middle">1</text><text x="1217.8" y="345" font-family="Liberation Sans" font-size="6.2" fill="#3a8ce0" stroke="#3a8ce0" stroke-width="0.08" letter-spacing="0.2" text-anchor="middle">3</text><text x="1231.6" y="345" font-family="Liberation Sans" font-size="6.2" fill="#3a8ce0" stroke="#3a8ce0" stroke-width="0.08" letter-spacing="0.2" text-anchor="middle">15</text><text x="1245.5" y="345" font-family="Liberation Sans" font-size="6.2" fill="#3a8ce0" stroke="#3a8ce0" stroke-width="0.08" letter-spacing="0.2" text-anchor="middle">50</text><text x="1259.4" y="345" font-family="Liberation Sans" font-size="6.2" fill="#3a8ce0" stroke="#3a8ce0" stroke-width="0.08" letter-spacing="0.2" text-anchor="middle">85</text><text x="1273.2" y="345" font-family="Liberation Sans" font-size="6.2" fill="#3a8ce0" stroke="#3a8ce0" stroke-width="0.08" letter-spacing="0.2" text-anchor="middle">97</text><text x="1287.1" y="345" font-family="Liberation Sans" font-size="6.2" fill="#3a8ce0" stroke="#3a8ce0" stroke-width="0.08" letter-spacing="0.2" text-anchor="middle">99</text><text x="1299.0" y="345" font-family="Liberation Sans" font-size="6.2" fill="#3a8ce0" stroke="#3a8ce0" stroke-width="0.08" letter-spacing="0.2" text-anchor="middle">100</text></svg>
</body></html>
